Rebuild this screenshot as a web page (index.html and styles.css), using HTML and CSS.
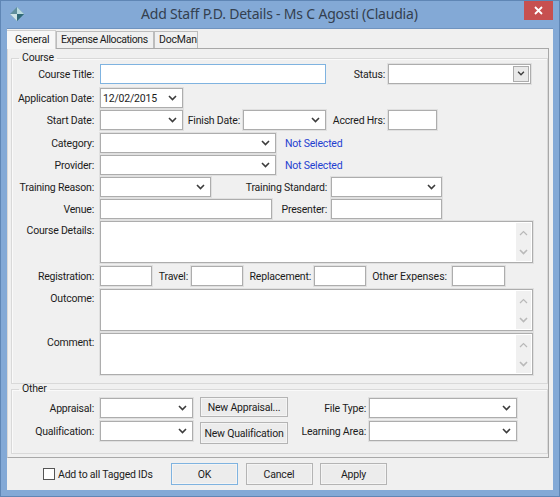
FILE: index.html
```html
<!DOCTYPE html>
<html lang="en">
<head>
<meta charset="utf-8">
<title>Add Staff P.D. Details</title>
<link rel="stylesheet" href="styles.css">
</head>
<body>
<svg class="defs" width="0" height="0" aria-hidden="true">
  <symbol id="chev" viewBox="0 0 9 6"><path d="M1 1l3.5 3.5L8 1" fill="none" stroke="currentColor" stroke-width="1.6"/></symbol>
  <symbol id="chevup" viewBox="0 0 9 6"><path d="M1 5L4.5 1.5 8 5" fill="none" stroke="currentColor" stroke-width="1.2"/></symbol>
</svg>
<div class="window">
  <header class="titlebar">
    <svg class="appicon" viewBox="0 0 14 14" width="14" height="14"><path d="M7 0l7 7-7 7-7-7z" fill="#5f8f9c"/><path d="M7 0l7 7H7z" fill="#b9dbe0"/><path d="M0 7h7v7z" fill="#cfe4e8"/><path d="M7 7h7l-7 7z" fill="#2f6a78"/></svg>
    <h1 class="title">Add Staff P.D. Details - Ms C Agosti (Claudia)</h1>
    <div class="close"><svg viewBox="0 0 9 9" width="9" height="9"><path d="M1 1l7 7M8 1L1 8" stroke="#fff" stroke-width="1.8"/></svg></div>
  </header>
  <main class="content">
    <nav class="tabs">
      <div class="tab active">General</div>
      <div class="tab t2">Expense Allocations</div>
      <div class="tab t3">DocMan</div>
    </nav>
    <section class="panel">
      <fieldset class="group course">
        <legend>Course</legend>
        <div class="row r1">
          <label class="lbl">Course Title:</label><div class="field focus w226"></div>
          <label class="lbl l59">Status:</label>
          <div class="field w143 statusbox"><span class="dropbtn"><svg class="chev"><use href="#chev"/></svg></span></div>
        </div>
        <div class="row r2">
          <label class="lbl">Application Date:</label><div class="field w83 combo"><span class="val">12/02/2015</span><svg class="chev"><use href="#chev"/></svg></div>
        </div>
        <div class="row r3">
          <label class="lbl">Start Date:</label><div class="field w83 combo"><svg class="chev"><use href="#chev"/></svg></div>
          <label class="lbl l60">Finish Date:</label><div class="field w83 combo"><svg class="chev"><use href="#chev"/></svg></div>
          <label class="lbl l62">Accred Hrs:</label><div class="field w49"></div>
        </div>
        <div class="row r4">
          <label class="lbl">Category:</label><div class="field w176 combo"><svg class="chev"><use href="#chev"/></svg></div>
          <a class="link">Not Selected</a>
        </div>
        <div class="row r5">
          <label class="lbl">Provider:</label><div class="field w176 combo"><svg class="chev"><use href="#chev"/></svg></div>
          <a class="link">Not Selected</a>
        </div>
        <div class="row r6">
          <label class="lbl">Training Reason:</label><div class="field w111 combo"><svg class="chev"><use href="#chev"/></svg></div>
          <label class="lbl l120">Training Standard:</label><div class="field w111 combo"><svg class="chev"><use href="#chev"/></svg></div>
        </div>
        <div class="row r7">
          <label class="lbl">Venue:</label><div class="field w172"></div>
          <label class="lbl l59b">Presenter:</label><div class="field w111"></div>
        </div>
        <div class="row r8 tall">
          <label class="lbl top">Course Details:</label><div class="field w433 area"><div class="scroll"><svg class="sc"><use href="#chevup"/></svg><svg class="sc"><use href="#chev"/></svg></div></div>
        </div>
        <div class="row r9">
          <label class="lbl">Registration:</label><div class="field w52"></div>
          <label class="lbl l39">Travel:</label><div class="field w52"></div>
          <label class="lbl l71">Replacement:</label><div class="field w52"></div>
          <label class="lbl l86">Other Expenses:</label><div class="field w53"></div>
        </div>
        <div class="row r10 tall">
          <label class="lbl top">Outcome:</label><div class="field w433 area"><div class="scroll"><svg class="sc"><use href="#chevup"/></svg><svg class="sc"><use href="#chev"/></svg></div></div>
        </div>
        <div class="row r11 tall">
          <label class="lbl top">Comment:</label><div class="field w433 area"><div class="scroll"><svg class="sc"><use href="#chevup"/></svg><svg class="sc"><use href="#chev"/></svg></div></div>
        </div>
      </fieldset>
      <fieldset class="group other">
        <legend>Other</legend>
        <div class="row o1">
          <label class="lbl">Appraisal:</label><div class="field w93 combo"><svg class="chev"><use href="#chev"/></svg></div>
          <button class="btn newa" type="button">New Appraisal...</button>
          <label class="lbl l81">File Type:</label><div class="field w148 combo"><svg class="chev"><use href="#chev"/></svg></div>
        </div>
        <div class="row o2">
          <label class="lbl">Qualification:</label><div class="field w93 combo"><svg class="chev"><use href="#chev"/></svg></div>
          <button class="btn newq" type="button">New Qualification</button>
          <label class="lbl l81">Learning Area:</label><div class="field w148 combo"><svg class="chev"><use href="#chev"/></svg></div>
        </div>
      </fieldset>
    </section>
    <footer class="actions">
      <span class="check"></span><span class="checklbl">Add to all Tagged IDs</span>
      <button class="btn big ok" type="button">OK</button>
      <button class="btn big" type="button">Cancel</button>
      <button class="btn big" type="button">Apply</button>
    </footer>
  </main>
</div>
</body>
</html>
```
FILE: styles.css
```css
* { box-sizing: border-box; }
html, body { margin: 0; padding: 0; }
body { width: 560px; height: 497px; overflow: hidden; font: 10.5px Roboto, "Liberation Sans", Arial, sans-serif; letter-spacing: -0.2px; color: #1c1c1c; }
.defs { position: absolute; }
.window { width: 560px; height: 497px; background: #83a9d6; border: 1px solid #5f86b5; display: flex; flex-direction: column; }
.titlebar { height: 27px; flex: none; display: flex; align-items: flex-start; position: relative; }
.appicon { margin: 6px 0 0 9px; flex: none; }
.title { position: absolute; left: 140px; top: 3px; margin: 0; font: 400 14px "Noto Sans", sans-serif; letter-spacing: -0.2px; color: #33404f; white-space: nowrap; line-height: 20px; }
.close { position: absolute; left: 523px; top: 0; width: 29px; height: 19px; background: #c75050; display: flex; align-items: center; justify-content: center; }
.content { margin: 0 6px; width: 546px; height: 462px; background: #f0f0f0; border-top: 1px solid #6f93bf; position: relative; }
.tabs { display: flex; height: 19px; align-items: flex-end; }
.tab { height: 17px; line-height: 16px; padding: 0 0 0 4px; background: #f0f0f0; border: 1px solid #bcbcbc; border-bottom: none; white-space: nowrap; }
.tab.active { height: 19px; background: #f7f7f7; width: 49px; padding: 0 0 0 8px; line-height: 17px; border-color: #d0d0d0; border-left: none; z-index: 1; position: relative; margin-bottom: -1px; }
.t2 { width: 98px; letter-spacing: -0.4px; }
.t3 { width: 44px; }
.panel { width: 542px; height: 410px; background: #f0f0f0; border: 1px solid #a8a8a8; border-left-color: #d8d8d8; padding: 2px 0 0 3px; }
.group { margin: 0; padding: 0; border: 1px solid #d9d9d9; min-width: 0; box-shadow: inset 1px 1px 0 #fafafa; }
.group legend { margin-left: 7px; padding: 0 3px; line-height: 14px; height: 14px; }
.course { height: 333px; width: 537px; }
.other { height: 72px; width: 537px; margin-top: -2px; }
.row { display: flex; align-items: center; height: 20px; }
.tall { align-items: flex-start; height: 42px; }
.lbl { flex: none; text-align: right; white-space: nowrap; }
.lbl:first-child { width: 82px; margin-right: 6px; }
.lbl.top { line-height: 14px; padding-top: 3px; }
.field { flex: none; height: 20px; background: #fff; border: 1px solid #adadad; box-shadow: 0 0 0 1px rgba(190,190,190,.3); position: relative; }
.focus { border-color: #7fb3e0; box-shadow: none; }
.combo { display: flex; align-items: center; }
.val { padding-left: 2px; }
.chev { position: absolute; right: 5px; top: 6px; width: 9px; height: 6px; color: #3c3c3c; }
.w226 { width: 226px; } .w143 { width: 143px; } .w83 { width: 83px; } .w49 { width: 49px; }
.w176 { width: 176px; } .w111 { width: 111px; } .w172 { width: 172px; } .w433 { width: 433px; height: 42px; }
.w52 { width: 52px; } .w53 { width: 53px; } .w93 { width: 93px; } .w148 { width: 148px; }
.l59 { width: 59px; margin-right: 3px; } .l60 { width: 57px; margin-right: 3px; } .l62 { width: 59px; margin-right: 3px; }
.l120 { width: 116px; margin-right: 4px; } .l59b { width: 55px; margin-right: 4px; }
.l39 { width: 36px; margin-right: 3px; } .l71 { width: 68px; margin-right: 3px; } .l86 { width: 81px; margin-right: 5px; letter-spacing: -0.05px; }
.l81 { width: 78px; margin-right: 3px; }
.r1 { margin-top: -1px; }
.r2 { margin-top: 4px; }
.r3 { margin-top: 2px; }
.r4 { margin-top: 3px; }
.r5, .r6, .r7 { margin-top: 2px; }
.r8 { margin-top: 2px; }
.r9 { margin-top: 3px; }
.r10 { margin-top: 3px; }
.r11 { margin-top: 2px; }
.link { margin-left: 9px; color: #1f3fd0; }
.statusbox .dropbtn { position: absolute; right: 1px; top: 1px; width: 16px; height: 16px; background: #e9e9e9; border: 1px solid #acacac; }
.statusbox .chev { right: 3px; top: 4px; width: 8px; height: 5px; }
.area { overflow: hidden; }
.scroll { position: absolute; right: 1px; top: 1px; bottom: 1px; width: 15px; background: #f0f0f0; display: flex; flex-direction: column; justify-content: space-between; align-items: center; padding: 7px 0 6px; }
.sc { width: 9px; height: 6px; color: #b9b9b9; }
.btn { flex: none; font: inherit; letter-spacing: inherit; white-space: nowrap; color: #1c1c1c; background: #ececec; border: 1px solid #b4b4b4; box-shadow: inset 0 0 0 1px #f4f4f4; padding: 0; }
.newa { width: 88px; height: 20px; margin: 0 0 2px 7px; }
.newq { width: 88px; height: 22px; margin: 4px 0 0 7px; }
.o1 { margin-top: 2px; }
.o2 { margin-top: 3px; }
.actions { display: flex; align-items: center; height: 22px; margin-top: 5px; padding-left: 36px; }
.check { width: 12px; height: 12px; background: #fff; border: 1px solid #555; flex: none; }
.checklbl { margin-left: 3px; width: 113px; }
.big { width: 67px; height: 22px; margin-right: 7.5px; }
.ok { border-color: #7fb3e0; }
```
